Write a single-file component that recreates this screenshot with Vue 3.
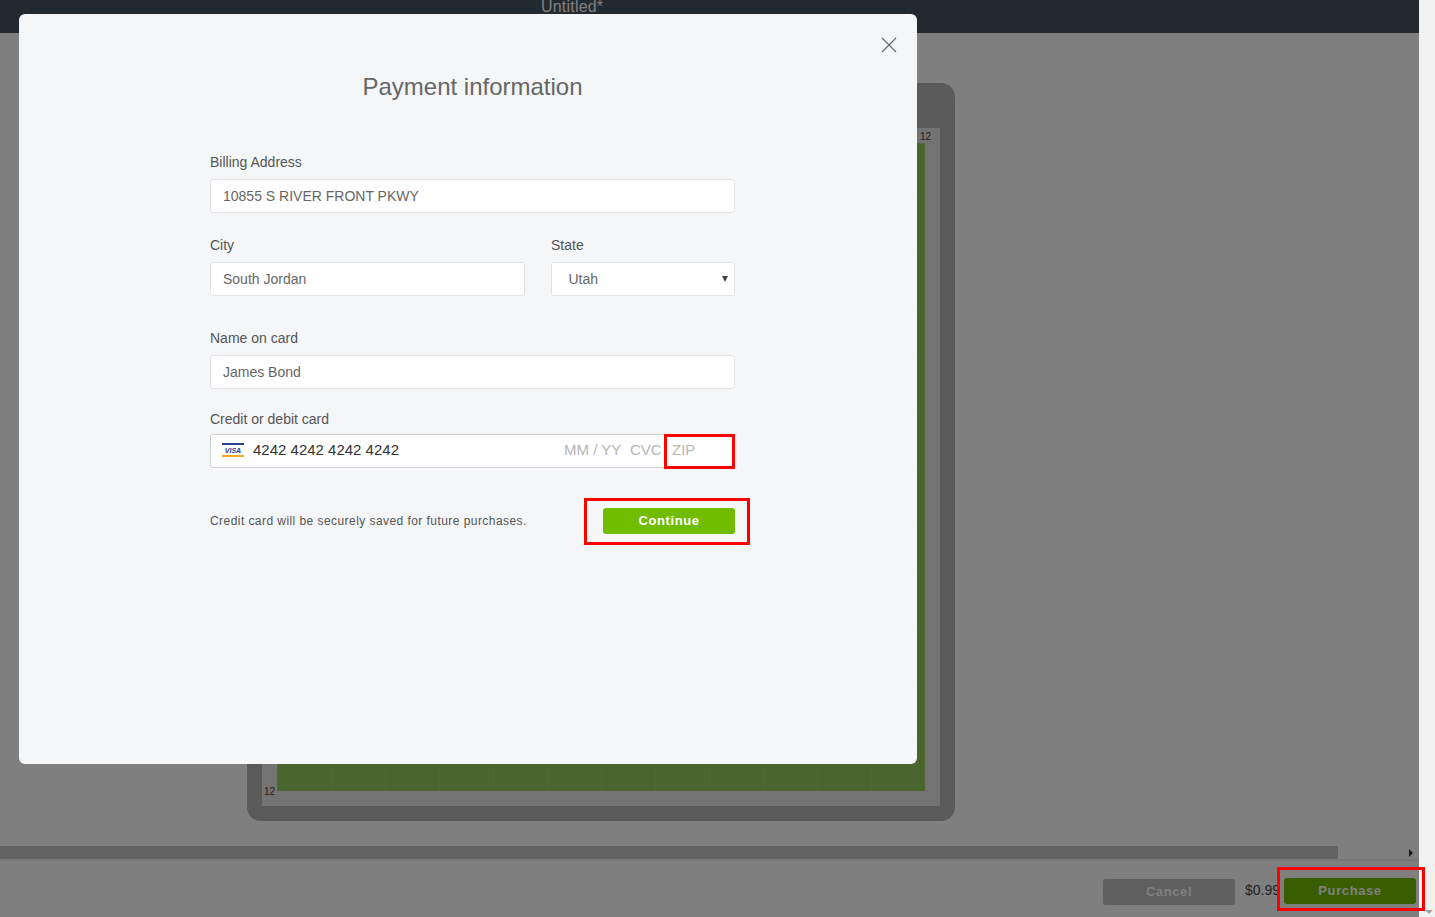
<script setup>
const form = {
  address: '10855 S RIVER FRONT PKWY',
  city: 'South Jordan',
  state: 'Utah',
  name: 'James Bond'
}
</script>

<template>
  <div class="page">
    <div class="app">
      <div class="topbar"><span class="doc-title">Untitled*</span></div>

      <div class="workspace">
        <div class="frame">
          <div class="sheet">
            <span class="ruler ruler-top">12</span>
            <div class="grid"></div>
            <span class="ruler ruler-bottom">12</span>
          </div>
        </div>
      </div>

      <div class="hscroll">
        <div class="hthumb"></div>
        <span class="harrow"></span>
      </div>

      <div class="bottombar">
        <button class="btn btn-cancel">Cancel</button>
        <span class="price">$0.99</span>
        <button class="btn btn-purchase">Purchase</button>
      </div>

      <div class="dim"></div>
    </div>

    <div class="vscroll"><span class="varrow"></span></div>

    <div class="modal">
      <svg class="close" width="16" height="16" viewBox="0 0 16 16">
        <path d="M1 1 L15 15 M15 1 L1 15" stroke="#666" stroke-width="1.1" fill="none" />
      </svg>

      <h2 class="title">Payment information</h2>

      <div class="form">
        <label class="label">Billing Address</label>
        <input class="input" :value="form.address" readonly />

        <div class="row row-city">
          <div class="col-city">
            <label class="label">City</label>
            <input class="input" :value="form.city" readonly />
          </div>
          <div class="col-state">
            <label class="label">State</label>
            <div class="input select">
              <span>{{ form.state }}</span>
              <span class="caret"></span>
            </div>
          </div>
        </div>

        <div class="group-name">
          <label class="label">Name on card</label>
          <input class="input" :value="form.name" readonly />
        </div>

        <div class="group-card">
          <label class="label label-card">Credit or debit card</label>
          <div class="card">
            <svg class="visa" width="22" height="14" viewBox="0 0 22 14">
              <rect x="0" y="0" width="22" height="14" rx="1" fill="#fff" />
              <rect x="0" y="0" width="22" height="2" fill="#26408f" />
              <rect x="0" y="12" width="22" height="2" fill="#f5a623" />
              <text x="11" y="9.8" text-anchor="middle" class="visa-text">VISA</text>
            </svg>
            <span class="card-number">4242 4242 4242 4242</span>
            <span class="card-ph ph-exp">MM / YY</span>
            <span class="card-ph ph-cvc">CVC</span>
            <span class="card-ph ph-zip">ZIP</span>
            <div class="mark mark-zip"></div>
          </div>
        </div>

        <div class="foot">
          <span class="note">Credit card will be securely saved for future purchases.</span>
          <div class="continue-wrap">
            <button class="btn btn-continue">Continue</button>
            <div class="mark mark-continue"></div>
          </div>
        </div>
      </div>
    </div>

    <div class="mark mark-purchase"></div>
  </div>
</template>

<style>
html, body {
  margin: 0;
  overflow: hidden;
}
</style>

<style scoped>
.page {
  position: relative;
  display: flex;
  width: 1435px;
  height: 917px;
  overflow: hidden;
  font-family: "Liberation Sans", Arial, sans-serif;
  background: #f1f1f1;
}

.app {
  position: relative;
  display: flex;
  flex-direction: column;
  width: 1419px;
  height: 917px;
  background: #fff;
}

.topbar {
  flex: none;
  height: 33px;
  padding-left: 541px;
  background: #46545e;
  overflow: hidden;
}

.doc-title {
  display: block;
  margin-top: -1px;
  font-size: 16px;
  line-height: 16px;
  letter-spacing: 0.2px;
  color: #fff;
}

.workspace {
  flex: 1;
  padding: 50px 0 0 247px;
}

.frame {
  width: 678px;
  height: 678px;
  padding: 45px 15px 15px;
  border-radius: 14px;
  background: #b4b4b4;
}

.sheet {
  position: relative;
  width: 648px;
  height: 648px;
  padding: 15px;
  background: #e6e6e6;
}

.grid {
  width: 648px;
  height: 648px;
  background-color: #96ca5c;
  background-image:
    repeating-linear-gradient(to right, #a8c884 0, #a8c884 1px, transparent 1px, transparent 54px),
    repeating-linear-gradient(to bottom, #a8c884 0, #a8c884 1px, transparent 1px, transparent 54px);
}

.ruler {
  position: absolute;
  font-size: 10px;
  line-height: 12px;
  color: #444;
}

.ruler-top {
  top: 3px;
  right: 9px;
}

.ruler-bottom {
  bottom: 8px;
  left: 2px;
}

.hscroll {
  position: relative;
  flex: none;
  height: 13px;
}

.hthumb {
  width: 1338px;
  height: 13px;
  background: #c6c6c6;
}

.harrow {
  position: absolute;
  top: 3px;
  left: 1409px;
  border-left: 4px solid #333;
  border-top: 4px solid transparent;
  border-bottom: 4px solid transparent;
}

.bottombar {
  flex: none;
  display: flex;
  justify-content: flex-end;
  align-items: flex-start;
  height: 58px;
  padding: 17px 3px 0 0;
  box-sizing: border-box;
  border-top: 2px solid #eeeeee;
}

.btn {
  width: 132px;
  height: 26px;
  padding: 0 0 2px;
  border: 0;
  border-radius: 3px;
  font-family: inherit;
  font-size: 13px;
  font-weight: 700;
  letter-spacing: 0.6px;
  color: #fff;
}

.btn-cancel {
  margin-top: 1px;
  background: #bebebe;
}

.price {
  width: 49px;
  padding-left: 10px;
  box-sizing: border-box;
  margin-top: 4px;
  font-size: 14px;
  line-height: 17px;
  color: #444;
  white-space: nowrap;
  overflow: hidden;
}

.btn-purchase {
  background: #72bc00;
}

.dim {
  position: absolute;
  inset: 0;
  background: rgba(0, 0, 0, 0.5);
}

.vscroll {
  position: relative;
  width: 16px;
  background: #f1f1f1;
}

.varrow {
  position: absolute;
  top: 910px;
  left: 6px;
  border-top: 4px solid #a3a3a3;
  border-left: 4px solid transparent;
  border-right: 4px solid transparent;
}

.modal {
  position: absolute;
  top: 14px;
  left: 19px;
  width: 898px;
  height: 750px;
  box-sizing: border-box;
  padding: 59px 182px 0 191px;
  border-radius: 6px;
  background: #f4f6f8;
}

.close {
  position: absolute;
  top: 23px;
  right: 20px;
}

.title {
  margin: 0 0 53px;
  font-size: 24px;
  line-height: 28px;
  font-weight: 400;
  text-align: center;
  color: #666;
}

.label {
  display: block;
  margin-bottom: 8px;
  font-size: 14px;
  line-height: 17px;
  color: #555;
}

.label-card {
  margin-bottom: 6px;
}

.input {
  display: block;
  width: 100%;
  height: 34px;
  box-sizing: border-box;
  padding: 0 12px;
  border: 1px solid #e2e4e7;
  border-radius: 3px;
  outline: 0;
  background: #fff;
  font-family: inherit;
  font-size: 14px;
  color: #666;
}

.row {
  display: flex;
  gap: 26px;
}

.row-city {
  margin-top: 24px;
}

.col-city {
  width: 315px;
}

.col-state {
  width: 184px;
}

.select {
  display: flex;
  align-items: center;
  justify-content: space-between;
  padding: 0 6px 0 16.5px;
}

.caret {
  border-top: 6px solid #444;
  border-left: 3px solid transparent;
  border-right: 3px solid transparent;
}

.group-name {
  margin-top: 34px;
}

.group-card {
  margin-top: 22px;
}

.card {
  position: relative;
  display: flex;
  align-items: center;
  height: 34px;
  box-sizing: border-box;
  padding-bottom: 3px;
  border: 1px solid #cdcfd2;
  border-radius: 3px;
  background: #fff;
  font-size: 15px;
}

.visa {
  position: absolute;
  top: 8px;
  left: 11px;
}

.visa-text {
  font-family: "Liberation Sans", Arial, sans-serif;
  font-size: 7px;
  font-weight: 700;
  font-style: italic;
  fill: #26408f;
}

.card-number {
  position: absolute;
  left: 42px;
  color: #333;
}

.card-ph {
  position: absolute;
  color: #b5b5b5;
}

.ph-exp {
  left: 353px;
}

.ph-cvc {
  left: 419px;
}

.ph-zip {
  left: 461px;
}

.mark {
  position: absolute;
  box-sizing: border-box;
  border: 3px solid #f00;
  pointer-events: none;
}

.mark-zip {
  top: -1px;
  right: -1px;
  width: 71px;
  height: 35px;
}

.foot {
  display: flex;
  align-items: center;
  justify-content: space-between;
  margin-top: 40px;
}

.note {
  font-size: 12px;
  line-height: 26px;
  letter-spacing: 0.44px;
  color: #555;
}

.continue-wrap {
  position: relative;
}

.btn-continue {
  display: block;
  background: #72bc00;
}

.mark-continue {
  top: -10px;
  left: -19px;
  width: 166px;
  height: 47px;
}

.mark-purchase {
  top: 867px;
  left: 1277px;
  width: 148px;
  height: 44px;
}
</style>
